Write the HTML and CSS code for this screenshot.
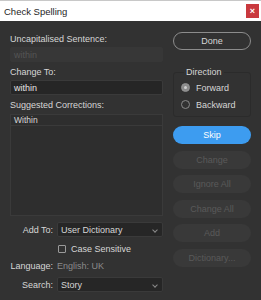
FILE: index.html
```html
<!DOCTYPE html>
<html lang="en">
<head>
    <meta charset="UTF-8">
    <title>Check Spelling</title>
    <link rel="stylesheet" href="styles.css">
</head>
<body>
    <div class="titlebar">
        <span class="title">Check Spelling</span>
        <button class="close">&#215;</button>
    </div>
    <div class="dialog">
        <div class="left">
            <label class="label">Uncapitalised Sentence:</label>
            <div class="field field-disabled">within</div>
            <label class="label">Change To:</label>
            <div class="field">within</div>
            <label class="label">Suggested Corrections:</label>
            <div class="list">
                <div class="list-item">Within</div>
            </div>
            <div class="options">
                <span class="opt-label">Add To:</span>
                <div class="select">User Dictionary<span class="caret"></span></div>
                <span></span>
                <label class="check"><span class="box"></span>Case Sensitive</label>
                <span class="opt-label">Language:</span>
                <span class="lang">English: UK</span>
                <span class="opt-label">Search:</span>
                <div class="select">Story<span class="caret"></span></div>
            </div>
        </div>
        <div class="right">
            <button class="btn btn-outline">Done</button>
            <div class="group">
                <span class="legend">Direction</span>
                <label class="radio"><span class="dot dot-on"></span>Forward</label>
                <label class="radio"><span class="dot"></span>Backward</label>
            </div>
            <div class="buttons">
                <button class="btn btn-primary">Skip</button>
                <button class="btn" disabled>Change</button>
                <button class="btn" disabled>Ignore All</button>
                <button class="btn" disabled>Change All</button>
                <button class="btn" disabled>Add</button>
                <button class="btn" disabled>Dictionary...</button>
            </div>
        </div>
    </div>
</body>
</html>
```

FILE: styles.css
```css
* {
    margin: 0;
    padding: 0;
    box-sizing: border-box;
    font-family: "Liberation Sans", Arial, sans-serif;
}
body {
    width: 261px;
    height: 300px;
    background: #323232;
    color: #d6d6d6;
    font-size: 9px;
    overflow: hidden;
}
.titlebar {
    height: 21px;
    background: #fff;
    border-top: 1px solid #c8c8c8;
    display: flex;
    align-items: center;
    justify-content: space-between;
    padding: 0 2px 0 4px;
}
.title {
    color: #1e1e1e;
    font-size: 9.5px;
}
.close {
    width: 13px;
    height: 14px;
    background: #c9393e;
    color: #fff;
    border: none;
    font-size: 9px;
    line-height: 14px;
    font-weight: bold;
}
.dialog {
    display: flex;
    padding: 11px 10px 0 10px;
    gap: 10px;
}
.left {
    width: 153px;
    display: flex;
    flex-direction: column;
}
.label {
    display: block;
    height: 15px;
    line-height: 15px;
}
.field {
    height: 15px;
    line-height: 15px;
    padding: 0 3px;
    background: #262626;
    border: 1px solid #3a3a3a;
    border-radius: 2px;
    color: #e6e6e6;
    margin-bottom: 3px;
}
.field-disabled {
    background: #373737;
    border-color: #373737;
    color: #555;
}
.list {
    height: 102px;
    background: #2e2e2e;
    border: 1px solid #3a3a3a;
    margin-top: 1px;
}
.list-item {
    height: 11px;
    line-height: 10px;
    font-size: 8.5px;
    padding-left: 3px;
    border-bottom: 1px solid #3a3a3a;
}
.options {
    display: grid;
    grid-template-columns: 43px 1fr;
    column-gap: 4px;
    row-gap: 6px;
    align-items: center;
    margin-top: 6px;
}
.opt-label {
    text-align: right;
}
.select {
    position: relative;
    height: 15px;
    line-height: 15px;
    padding: 0 3px;
    background: #262626;
    border: 1px solid #3a3a3a;
    border-radius: 2px;
}
.caret {
    position: absolute;
    right: 5px;
    top: 5px;
    width: 4px;
    height: 4px;
    border-right: 1px solid #8a8a8a;
    border-bottom: 1px solid #8a8a8a;
    transform: rotate(45deg);
}
.check {
    display: flex;
    align-items: center;
    gap: 5px;
    height: 12px;
    padding-left: 1px;
}
.box {
    width: 8px;
    height: 8px;
    border: 1px solid #9a9a9a;
    border-radius: 1px;
}
.lang {
    color: #8a8a8a;
}
.right {
    width: 78px;
    display: flex;
    flex-direction: column;
}
.btn {
    width: 78px;
    height: 18px;
    border-radius: 9px;
    border: none;
    background: #393939;
    color: #595959;
    font-size: 9px;
}
.btn-outline {
    background: transparent;
    border: 1px solid #8c8c8c;
    color: #d6d6d6;
}
.btn-primary {
    background: #3d9cf0;
    color: #fff;
}
.group {
    position: relative;
    margin-top: 22px;
    height: 45px;
    border: 1px solid #2b2b2b;
    border-radius: 3px;
    padding: 9px 0 0 7px;
    display: flex;
    flex-direction: column;
    gap: 6px;
}
.legend {
    position: absolute;
    top: -6px;
    left: 10px;
    padding: 0 2px;
    background: #323232;
}
.radio {
    display: flex;
    align-items: center;
    gap: 6px;
    height: 11px;
}
.dot {
    width: 9px;
    height: 9px;
    border-radius: 50%;
    border: 1px solid #8a8a8a;
}
.dot-on {
    background: #8a8a8a;
    border-color: #8a8a8a;
    box-shadow: inset 0 0 0 2px #8a8a8a, inset 0 0 0 4px #cfcfcf;
}
.buttons {
    margin-top: 9px;
    display: flex;
    flex-direction: column;
    gap: 6.5px;
}
```
